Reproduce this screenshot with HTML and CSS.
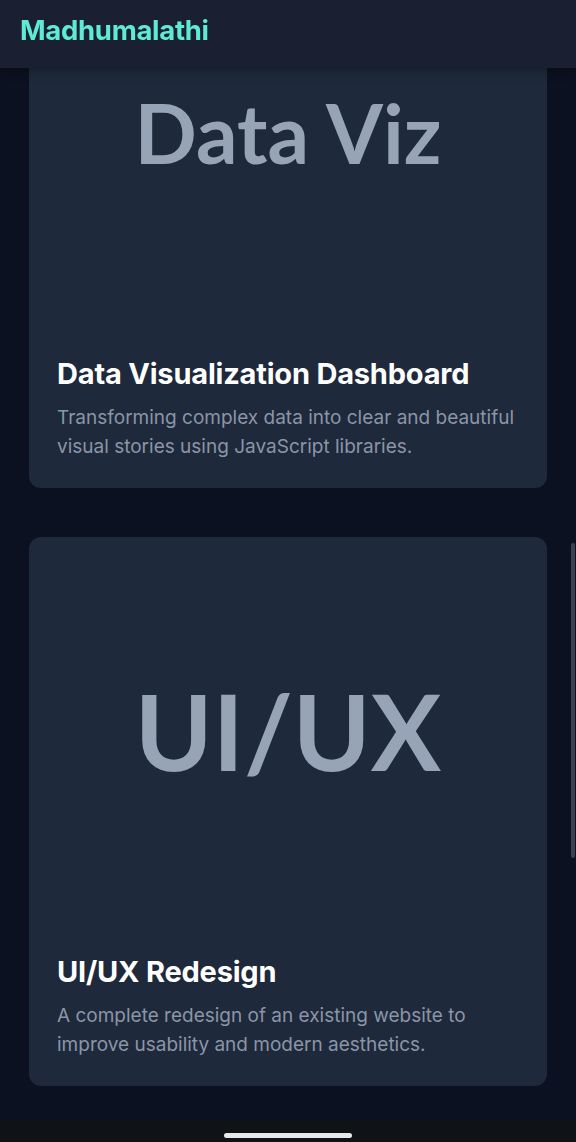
FILE: index.html
```html
<!DOCTYPE html>
<html lang="en">
<head>
<meta charset="utf-8">
<title>Madhumalathi</title>
<link rel="stylesheet" href="styles.css">
</head>
<body>
<header class="topbar">
  <span class="brand">Madhumalathi</span>
</header>
<main class="projects">
  <article class="card">
    <div class="thumb"><span class="thumb-text thumb-small">Data Viz</span></div>
    <div class="card-body">
      <h3 class="card-title">Data Visualization Dashboard</h3>
      <p class="card-desc">Transforming complex data into clear and beautiful visual stories using JavaScript libraries.</p>
    </div>
  </article>
  <article class="card">
    <div class="thumb"><span class="thumb-text thumb-large">UI/UX</span></div>
    <div class="card-body">
      <h3 class="card-title">UI/UX Redesign</h3>
      <p class="card-desc">A complete redesign of an existing website to improve usability and modern aesthetics.</p>
    </div>
  </article>
</main>
<div class="scroll-thumb"></div>
<div class="navbar"><span class="nav-pill"></span></div>
</body>
</html>
```
FILE: styles.css
```css
html, body {
  margin: 0;
  padding: 0;
}
body {
  background: #0b1120;
  font-family: Inter, "Noto Sans", sans-serif;
  width: 576px;
  height: 1142px;
  overflow: hidden;
  position: relative;
}
.topbar {
  position: fixed;
  top: 0;
  left: 0;
  right: 0;
  height: 68px;
  background: #1a2031;
  box-shadow: 0 2px 10px rgba(0,0,0,0.35);
  display: flex;
  align-items: center;
  padding: 0 20px;
  box-sizing: border-box;
  z-index: 10;
}
.brand {
  color: #5eead4;
  font-weight: 700;
  font-size: 27.5px;
  letter-spacing: -0.3px;
  margin-top: -8px;
}
.projects {
  margin-top: -61px;
  padding: 0 29px;
  display: flex;
  flex-direction: column;
  gap: 49px;
}
.card {
  background: #1e293b;
  border-radius: 12px;
  overflow: hidden;
}
.thumb {
  height: 390px;
  display: flex;
  align-items: center;
  justify-content: center;
}
.thumb-text {
  font-family: Lato, "Open Sans", sans-serif;
  font-weight: 700;
  color: #97a4b8;
  line-height: 1;
}
.thumb-small {
  font-size: 82px;
  margin-bottom: 4px;
}
.thumb-large {
  font-size: 105px;
  margin-bottom: 4px;
}
.card-body {
  padding: 27px 28px 27px;
}
.card-title {
  margin: 0 0 11px;
  color: #ffffff;
  font-size: 29px;
  font-weight: 700;
  line-height: 36px;
  letter-spacing: -0.2px;
}
.card-desc {
  margin: 0;
  color: #8b95a7;
  font-size: 19px;
  line-height: 29px;
}
.scroll-thumb {
  position: fixed;
  right: 1px;
  top: 543px;
  width: 4px;
  height: 315px;
  background: #3a4150;
  border-radius: 2px;
}
.navbar {
  position: fixed;
  left: 0;
  right: 0;
  bottom: 0;
  height: 22px;
  background: #101316;
  display: flex;
  justify-content: center;
  align-items: flex-start;
}
.nav-pill {
  margin-top: 13px;
  width: 128px;
  height: 5px;
  border-radius: 3px;
  background: #e8e8e8;
}
```
